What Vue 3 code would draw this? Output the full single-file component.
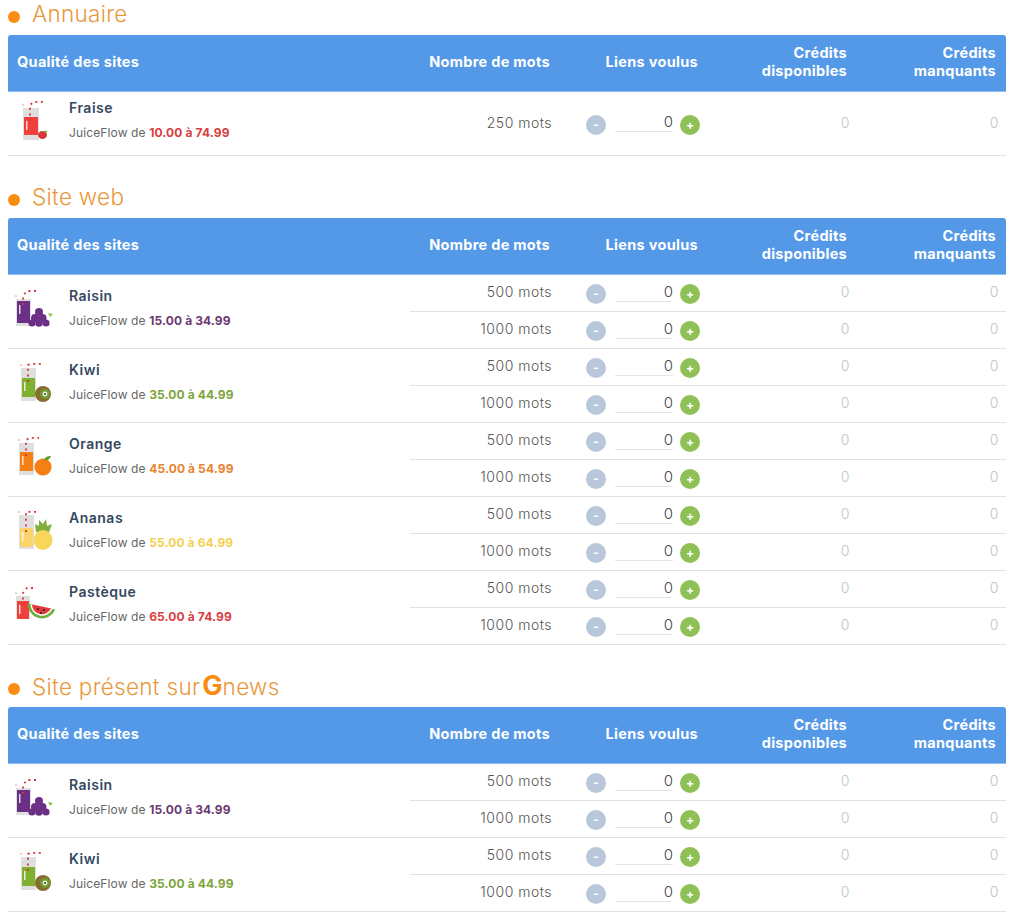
<template>
  <div class="page">
    <section v-for="section in sections" :key="section.title" class="section">
      <h2 class="section-title">
        <span class="dot"></span>
        <span>{{ section.title }}<template v-if="section.logo"><b class="logo-g">G</b>news</template></span>
      </h2>

      <div class="table-head">
        <div class="head-cell head-left">Qualité des sites</div>
        <div class="head-cell">Nombre de mots</div>
        <div class="head-cell">Liens voulus</div>
        <div class="head-cell">Crédits<br />disponibles</div>
        <div class="head-cell">Crédits<br />manquants</div>
      </div>

      <div v-for="row in section.rows" :key="row.name" class="group">
        <div class="info">
          <svg class="juice" viewBox="0 0 46 46" width="46" height="46">
            <!-- glass and straw -->
            <rect :x="row.glass[0]" :y="row.glass[1]" :width="row.glass[2]" :height="row.glass[3]" fill="#dfdfe0" />
            <rect :x="row.glass[0] + 1" :y="row.liquid[0]" :width="row.glass[2] - 2" :height="row.liquid[1]" :fill="row.color" />
            <rect :x="row.glass[0] + 3" :y="row.liquid[0] + 4" width="1.5" height="9" fill="#fff" opacity="0.8" />
            <path :d="strawPath(row)" fill="none" stroke="#d8343c" stroke-width="1.8" stroke-dasharray="2 3.6" />
            <circle :cx="row.glass[0]" :cy="row.glass[1] - 3" r="0.8" fill="#e58a80" />

            <g v-if="row.fruit === 'fraise'">
              <ellipse cx="30.5" cy="34" rx="4.5" ry="4" fill="#d9363a" />
              <path d="M31 30.5l3-1 1.5 1.5-2 1z" fill="#7fa83a" />
            </g>
            <g v-if="row.fruit === 'raisin'" fill="#6c2f86">
              <circle cx="27" cy="23" r="4" />
              <circle cx="23" cy="29" r="4" />
              <circle cx="30.5" cy="29" r="4" />
              <circle cx="20" cy="34" r="3.6" />
              <circle cx="27" cy="34" r="3.8" />
              <circle cx="34" cy="34" r="3.6" />
              <path d="M36 24l5 1-3 3z" fill="#8fc04a" />
            </g>
            <g v-if="row.fruit === 'kiwi'">
              <circle cx="31" cy="31" r="8" fill="#8a6b32" />
              <circle cx="33" cy="31" r="5" fill="#6fa02c" />
              <circle cx="33" cy="31" r="2.4" fill="#f2f2e2" />
              <circle cx="33" cy="31" r="1" fill="#333" />
            </g>
            <g v-if="row.fruit === 'orange'">
              <circle cx="31" cy="30" r="8.6" fill="#f47f12" />
              <path d="M32 23c1-3 3-4 7-4-1 3-3 5-7 4z" fill="#6d9a2c" />
            </g>
            <g v-if="row.fruit === 'ananas'">
              <path d="M24 21l-1-8 4 2 0-6 4 4 3-5 1 7 5-2-3 8z" fill="#7fae3c" />
              <ellipse cx="31" cy="29" rx="9.5" ry="10" fill="#f8d65a" />
            </g>
            <g v-if="row.fruit === 'pasteque'">
              <path d="M16 18.5A14 14 0 0 0 43 24.5z" fill="#6fae3a" />
              <path d="M18.5 19.2A11.5 11.5 0 0 0 40.5 24z" fill="#fff" />
              <path d="M20 19.5A10 10 0 0 0 39 23.6z" fill="#e6383c" />
              <circle cx="26" cy="24" r="1" fill="#222" />
              <circle cx="32" cy="25" r="1" fill="#222" />
              <circle cx="29" cy="28" r="1" fill="#222" />
            </g>
          </svg>
          <div class="info-text">
            <div class="name">{{ row.name }}</div>
            <div class="range">JuiceFlow de <b :style="{ color: row.priceColor }">{{ row.range }}</b></div>
          </div>
        </div>

        <div class="lines">
          <div v-for="words in row.words" :key="words" class="line" :class="{ tall: row.words.length === 1 }">
            <div class="words">{{ words }} mots</div>
            <div class="stepper">
              <button class="step minus">-</button>
              <span class="count">0</span>
              <button class="step plus">+</button>
            </div>
            <div class="credit">0</div>
            <div class="credit">0</div>
          </div>
        </div>
      </div>
    </section>
  </div>
</template>

<script setup>
const both = [500, 1000];

const strawPath = (row) => {
  const [x, y] = row.glass;
  const top = Math.max(y - 8, 0.8);
  return `M${x + 7} ${row.liquid[0] + 4}V${y - 3}L${x + 11} ${top}H${x + 20}`;
};

const raisin = {
  name: "Raisin",
  fruit: "raisin",
  range: "15.00 à 34.99",
  color: "#6c2f86",
  priceColor: "#6b3a72",
  glass: [4, 10, 15, 27],
  liquid: [12, 22],
  words: both,
};
const kiwi = {
  name: "Kiwi",
  fruit: "kiwi",
  range: "35.00 à 44.99",
  color: "#7fb02e",
  priceColor: "#7da53c",
  glass: [9, 5, 15, 33],
  liquid: [15, 19],
  words: both,
};

const sections = [
  {
    title: "Annuaire",
    rows: [
      {
        name: "Fraise",
        fruit: "fraise",
        range: "10.00 à 74.99",
        color: "#f0403c",
        priceColor: "#d9403f",
        glass: [11, 7, 16, 32],
        liquid: [16, 18],
        words: [250],
      },
    ],
  },
  {
    title: "Site web",
    rows: [
      raisin,
      kiwi,
      {
        name: "Orange",
        fruit: "orange",
        range: "45.00 à 54.99",
        color: "#f47f12",
        priceColor: "#e8832e",
        glass: [7, 6, 15, 32],
        liquid: [15, 19],
        words: both,
      },
      {
        name: "Ananas",
        fruit: "ananas",
        range: "55.00 à 64.99",
        color: "#fbd56a",
        priceColor: "#f4d152",
        glass: [7, 4, 15, 34],
        liquid: [17, 19],
        words: both,
      },
      {
        name: "Pastèque",
        fruit: "pasteque",
        range: "65.00 à 74.99",
        color: "#f0403c",
        priceColor: "#d9403f",
        glass: [4, 11, 14, 23],
        liquid: [16, 18],
        words: both,
      },
    ],
  },
  {
    title: "Site présent sur",
    logo: true,
    rows: [raisin, kiwi],
  },
];
</script>

<style scoped>
.page {
  width: 998px;
  margin-left: 8px;
  font-family: Inter, "Open Sans", sans-serif;
  color: #555;
}

.section-title {
  display: flex;
  align-items: center;
  height: 26px;
  box-sizing: border-box;
  margin: 27px 0 9px;
  padding-top: 2px;
  font-size: 22.5px;
  font-weight: 300;
  letter-spacing: 0.3px;
  line-height: 24px;
  color: #e8983c;
}

.section:first-child .section-title {
  margin-top: 0;
}

.dot {
  width: 12px;
  height: 12px;
  margin: 6px 12px 0 0;
  border-radius: 50%;
  background: #f98d12;
}

.logo-g {
  margin-left: 2px;
  font-size: 27px;
  font-weight: 700;
  letter-spacing: 0;
  color: #f98d12;
}

.table-head {
  display: grid;
  grid-template-columns: 402px 150px 148px 149px 149px;
  height: 56px;
  border-bottom: 1px solid #8dbcf0;
  border-radius: 3px 3px 0 0;
  background: #5499e8;
}

.head-cell {
  align-self: center;
  padding: 0 10px 3px;
  font-size: 14.5px;
  font-weight: 700;
  letter-spacing: 0.3px;
  line-height: 18px;
  color: #fff;
  text-align: right;
}

.head-cell.head-left {
  padding-left: 9px;
  text-align: left;
}

.group {
  display: flex;
  border-bottom: 1px solid #e0e0e0;
}

.info {
  display: flex;
  align-items: center;
  width: 402px;
  padding-left: 4px;
  box-sizing: border-box;
}

.juice {
  flex: none;
  margin-right: 11px;
}

.info-text {
  padding-bottom: 8px;
}

.name {
  font-size: 14px;
  font-weight: 600;
  letter-spacing: 0.5px;
  line-height: 25px;
  color: #34495e;
}

.range {
  font-size: 12px;
  letter-spacing: 0.12px;
  line-height: 25px;
  color: #666;
}

.range b {
  font-weight: 700;
}

.lines {
  flex: 1;
}

.line {
  display: grid;
  grid-template-columns: 150px 148px 149px 149px;
  align-items: center;
  height: 36px;
  font-size: 14px;
}

.line:not(:last-child) {
  border-bottom: 1px solid #e0e0e0;
}

.line.tall {
  height: 63px;
}

.words,
.credit {
  padding: 0 8px 3px;
  letter-spacing: 0.5px;
  font-weight: 300;
  text-align: right;
}

.credit {
  padding-right: 7px;
  color: #b8c3cf;
}

.stepper {
  display: flex;
  align-items: center;
  justify-content: flex-end;
  gap: 7px;
  padding-right: 8px;
  padding-top: 2px;
}

.count {
  width: 58px;
  height: 15px;
  box-sizing: border-box;
  margin-left: 2px;
  border-bottom: 1px solid #e4e4e4;
  font-size: 15px;
  font-weight: 300;
  line-height: 9px;
  color: #444;
  text-align: right;
}

.step {
  width: 20px;
  height: 20px;
  padding: 0;
  border: 0;
  border-radius: 50%;
  font-family: inherit;
  font-size: 12px;
  font-weight: 700;
  line-height: 20px;
  color: #fff;
}

.minus {
  background: #b8c7d9;
}

.plus {
  background: #8fc055;
}
</style>
